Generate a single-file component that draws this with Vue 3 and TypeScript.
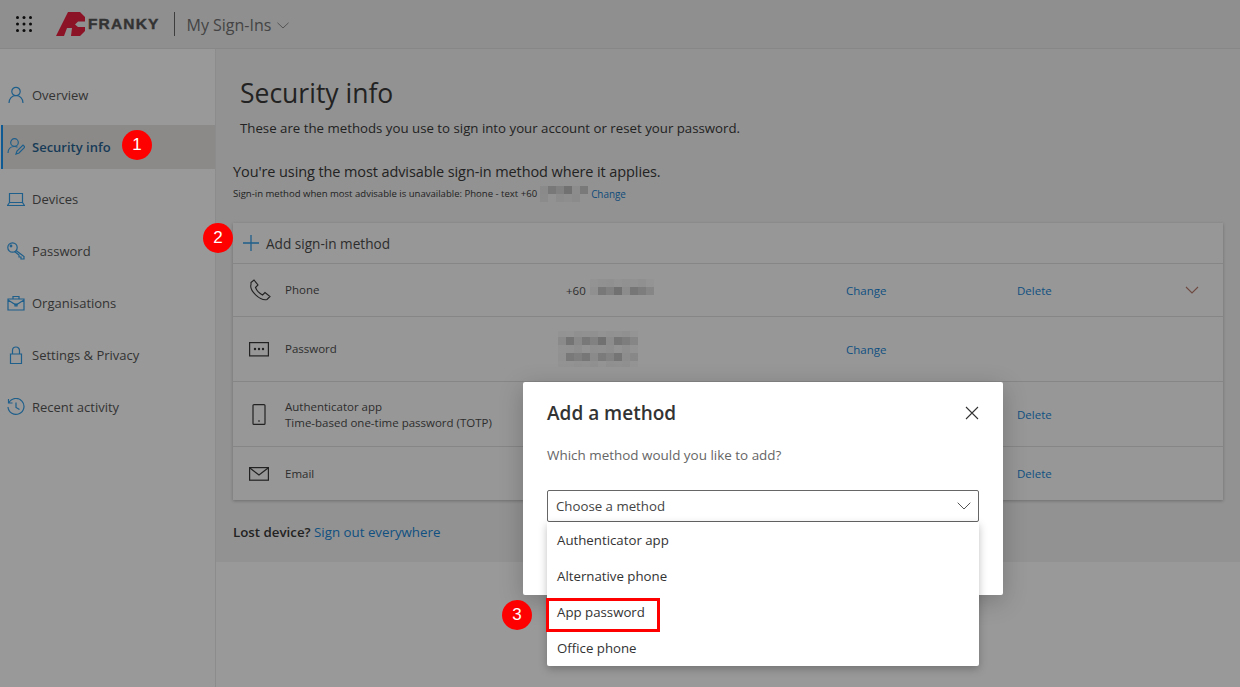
<script setup lang="ts">
const nav = [
  { label: 'Overview', icon: 'user' },
  { label: 'Security info', icon: 'sec', active: true },
  { label: 'Devices', icon: 'laptop' },
  { label: 'Password', icon: 'key' },
  { label: 'Organisations', icon: 'case' },
  { label: 'Settings & Privacy', icon: 'lock' },
  { label: 'Recent activity', icon: 'clock' },
]
const options = ['Authenticator app', 'Alternative phone', 'App password', 'Office phone']
const noise = [20, 31, 12, 36, 24, 29, 9, 33]
function blocks(cols: number, rows: number[], seed: number, edge: number) {
  const out: { x: number; y: number; f: string }[] = []
  rows.forEach((s, r) => {
    for (let c = 0; c < cols; c++) {
      const e = c === 0 || c === cols - 1 ? edge : 1
      const v = Math.round(0x95 - s * e * noise[(c * 3 + r + seed) % noise.length])
      out.push({ x: c * 8, y: r * 8, f: `rgb(${v},${v},${v})` })
    }
  })
  return out
}
const blurSmall = blocks(6, [1, 0.3], 2, 0.9)
const blurPhone = blocks(8, [0.15, 1], 1, 0.45)
const blurPass = blocks(10, [0.15, 1, 0.2, 0.9, 0.15], 3, 0.45)
</script>

<template>
  <div class="page">
    <header class="top">
      <svg class="waffle" width="16" height="16" viewBox="0 0 16 16" fill="#0c0c0c">
        <template v-for="y in [1.5, 8, 14.5]" :key="y">
          <circle v-for="x in [1.5, 8, 14.5]" :key="x" :cx="x" :cy="y" r="1.5" />
        </template>
      </svg>
      <div class="logo">
        <svg width="30" height="24" viewBox="0 0 30 24">
          <path d="M0 24 L12 0 L24 0 L29 5 L29 9.500 L22 9.500 L19 12.500 L22 15 L29 15 L29 19 L24 24 L15 24 L16 16 L11 16 L8 24 Z" fill="#8c1226" />
        </svg>
        <span class="logo-text">FRANKY</span>
      </div>
      <span class="sep"></span>
      <span class="app-name">My Sign-Ins</span>
      <svg class="app-chev" width="12" height="7" viewBox="0 0 12 7" fill="none" stroke="#555" stroke-width="1"><path d="M.5.8 6 6 11.500.8" /></svg>
    </header>
    <div class="body">
      <nav class="side">
        <div v-for="n in nav" :key="n.label" class="nav-item" :class="{ active: n.active }">
          <svg class="nav-ico" width="18" height="18" viewBox="0 0 18 18" fill="none" stroke="#1f5f8b" stroke-width="1.200">
            <template v-if="n.icon === 'user'"><circle cx="9" cy="5.500" r="4.200" /><path d="M2 17c0-4.500 3-7.500 7-7.500s7 3 7 7.500" /></template>
            <template v-else-if="n.icon === 'sec'"><circle cx="7.500" cy="4.500" r="3.800" /><path d="M1 15c0-4 2.800-6.500 6.500-6.500 1.200 0 2.200.2 3 .7" /><path d="M9 16l1-3 6-6 2 2-6 6z" /></template>
            <template v-else-if="n.icon === 'laptop'"><path d="M2.500 3.500h13v9h-13zM.5 15.500h17l-2-3h-13z" /></template>
            <template v-else-if="n.icon === 'key'"><circle cx="5.500" cy="5.500" r="4.700" /><circle cx="4" cy="4" r=".8" /><path d="M9 8.500l8 6v2.500h-3v-2h-2v-2l-4.500-3.500" /></template>
            <template v-else-if="n.icon === 'case'"><path d="M1 5h16v11H1zM6 5V2.500h6V5M1 6l8 5 8-5" /><path d="M8 10h2v2H8z" /></template>
            <template v-else-if="n.icon === 'lock'"><path d="M3.500 8h11v9.500h-11zM5.500 8V4.500a3.500 3.500 0 0 1 7 0V8" /></template>
            <template v-else><path d="M2 4.500A8 8 0 1 1 1 9M1.500 1v4h4M9 4.500V9.500l3.500 2" /></template>
          </svg>
          <span>{{ n.label }}</span>
        </div>
      </nav>
      <main class="main">
        <section class="panel">
          <h1>Security info</h1>
          <p class="lead">These are the methods you use to sign into your account or reset your password.</p>
          <p class="advice">You're using the most advisable sign-in method where it applies.</p>
          <p class="fallback">
            Sign-in method when most advisable is unavailable: Phone - text +60
            <svg class="blur" width="48" height="16"><rect v-for="(b, i) in blurSmall" :key="i" :x="b.x" :y="b.y" width="8" height="8" :fill="b.f" /></svg>
            <a>Change</a>
          </p>
          <div class="card">
            <div class="add-row">
              <svg width="16" height="16" viewBox="0 0 16 16" stroke="#1f5f8b" stroke-width="1.300"><path d="M8 0v16M0 8h16" /></svg>
              <span>Add sign-in method</span>
            </div>
            <div class="row r-phone">
              <svg class="row-ico" width="22" height="22" viewBox="0 0 22 22" fill="none" stroke="#222" stroke-width="1.100"><path d="M2 3.500 5 1l4 5-2.500 2.500c1 2.500 4 6 7 7.500l2.500-2.500 5 4-3 3c-7 1.500-18-9-16-15z" /></svg>
              <span class="name">Phone</span>
              <span class="val">+60 <svg class="blur up" width="64" height="16"><rect v-for="(b, i) in blurPhone" :key="i" :x="b.x" :y="b.y" width="8" height="8" :fill="b.f" /></svg></span>
              <a class="c1">Change</a>
              <a class="c2">Delete</a>
              <svg class="row-chev" width="14" height="8" viewBox="0 0 14 8" fill="none" stroke="#6e4a42" stroke-width="1.100"><path d="M1 1l6 6 6-6" /></svg>
            </div>
            <div class="row r-pass">
              <svg class="row-ico" width="20" height="16" viewBox="0 0 20 16" fill="none" stroke="#222" stroke-width="1.200"><rect x=".6" y="1.600" width="18.800" height="13.300" /><g fill="#222" stroke="none"><circle cx="6" cy="8" r="1.200" /><circle cx="10" cy="8" r="1.200" /><circle cx="14" cy="8" r="1.200" /></g></svg>
              <span class="name">Password</span>
              <span class="val"><svg class="blur pass" width="80" height="36"><rect v-for="(b, i) in blurPass" :key="i" :x="b.x" :y="b.y - 2" width="8" height="8" :fill="b.f" /></svg></span>
              <a class="c1">Change</a>
            </div>
            <div class="row r-auth">
              <svg class="row-ico phone-ico" width="20" height="21" viewBox="0 0 20 21" fill="none" stroke="#222" stroke-width="1.200"><rect x="4" y=".6" width="12" height="19.800" rx="1" /><path d="M9 17h2" /></svg>
              <span class="name two">Authenticator app<br />Time-based one-time password (TOTP)</span>
              <a class="c2">Delete</a>
            </div>
            <div class="row r-mail">
              <svg class="row-ico" width="20" height="14" viewBox="0 0 20 14" fill="none" stroke="#222" stroke-width="1.200"><rect x=".6" y=".6" width="18.800" height="12.600" /><path d="M.6.8 10 8l9.400-7.200" /></svg>
              <span class="name">Email</span>
              <a class="c2">Delete</a>
            </div>
          </div>
          <p class="lost"><b>Lost device?</b> <a>Sign out everywhere</a></p>
        </section>
      </main>
    </div>

    <div class="modal">
      <div class="m-head">
        <h2>Add a method</h2>
        <svg width="14" height="14" viewBox="0 0 14 14" stroke="#333" stroke-width="1.100"><path d="M1 1l12 12M13 1 1 13" /></svg>
      </div>
      <p class="m-q">Which method would you like to add?</p>
      <div class="select">
        <span>Choose a method</span>
        <svg width="14" height="8" viewBox="0 0 14 8" fill="none" stroke="#555" stroke-width="1"><path d="M.7.7 7 7 13.300.7" /></svg>
        <ul class="menu">
          <li v-for="o in options" :key="o">{{ o }}</li>
        </ul>
      </div>
    </div>

    <span class="badge b1">1</span>
    <span class="badge b2">2</span>
    <span class="badge b3">3</span>
    <span class="redbox"></span>
  </div>
</template>

<style>
html, body { margin: 0; padding: 0; background: #999; }
</style>

<style scoped>
.page { position: relative; width: 1240px; height: 687px; overflow: hidden; background: #999; color: #222; font-family: "Open Sans", "Noto Sans", sans-serif; font-size: 13px; }
.top { height: 48px; display: flex; align-items: center; background: #8f8f8f; border-bottom: 1px solid #878787; }
.waffle { margin-left: 16px; }
.logo { display: flex; align-items: center; margin-left: 24px; }
.logo-text { font-family: "Liberation Sans", sans-serif; font-weight: 700; font-size: 15.500px; letter-spacing: 1.150px; color: #333; margin-left: 2px; -webkit-text-stroke: .4px #333; }
.sep { width: 1px; height: 24px; background: #3d3d3d; margin-left: 15px; }
.app-name { font-size: 16px; line-height: 24px; padding-top: 2px; color: #444; margin-left: 11px; }
.app-chev { margin-left: 6px; margin-top: 3px; }
.body { display: flex; height: 638px; }
.side { width: 215px; padding-top: 24px; border-right: 1px solid #8c8c8c; flex: none; box-sizing: content-box; }
.nav-item { height: 44px; margin-bottom: 8px; display: flex; align-items: center; gap: 7px; padding-left: 7px; color: #333; box-sizing: border-box; }
.nav-ico { flex: none; }
.nav-item.active { background: #8b8a89; color: #173b57; font-weight: 600; border-left: 2px solid #0f5a92; margin-left: 1px; padding-left: 4px; }
.main { flex: 1; }
.panel { background: #929292; height: 513px; padding-left: 17px; padding-right: 17px; box-sizing: border-box; }
h1 { margin: 0; padding: 24px 0 0 7px; font-size: 26.500px; line-height: 40px; font-weight: 400; color: #222; }
.lead { margin: 5px 0 0 7px; font-size: 13.250px; line-height: 20px; color: #222; }
.advice { margin: 24px 0 0; font-size: 14.500px; letter-spacing: -.1px; line-height: 20px; color: #222; }
.fallback { margin: 2px 0 0; font-size: 9.550px; line-height: 20px; color: #222; height: 20px; display: flex; align-items: center; gap: 3px; }
.fallback a { color: #0f4c7a; font-size: 9.900px; }
a { color: #0f5081; }
.blur { display: inline-block; vertical-align: middle; }
.blur.up { margin-top: -7px; }
.card { margin-top: 19px; height: 277px; background: #979797; box-shadow: 0 1px 3px rgba(0,0,0,.25); }
.add-row { height: 40px; display: flex; align-items: center; gap: 7px; padding-left: 10px; border-bottom: 1px solid #868686; font-size: 13.600px; color: #2d2d2d; }
.row { position: relative; display: flex; align-items: center; border-bottom: 1px solid #868686; font-size: 11.500px; color: #2d2d2d; box-sizing: border-box; }
.r-phone { height: 53px; }
.r-pass { height: 65px; }
.r-auth { height: 65px; }
.r-mail { height: 53px; border-bottom: 0; }
.row-ico { position: absolute; left: 16px; }
.phone-ico { top: 22px; }
.name { position: absolute; left: 52px; line-height: 16px; }
.name.two { margin-top: 1px; }
.val { position: absolute; left: 333px; display: flex; align-items: center; gap: 4px; }
.blur.pass { margin-left: -8px; }
.c1 { position: absolute; left: 613px; }
.c2 { position: absolute; left: 784px; }
.row-chev { position: absolute; left: 952px; }
.lost { margin: 22px 0 0; font-size: 13.300px; line-height: 20px; color: #222; }
.lost b { font-weight: 600; }
.modal { position: absolute; left: 523px; top: 382px; width: 480px; height: 213px; background: #fff; border-radius: 2px; box-sizing: border-box; padding: 0 24px; box-shadow: 0 6px 24px rgba(0,0,0,.22); }
.m-head { display: flex; justify-content: space-between; align-items: center; height: 62px; padding-right: 0; }
h2 { margin: 0; font-size: 19px; font-weight: 600; color: #333; }
.m-q { margin: 0; font-size: 13.450px; line-height: 22px; color: #666; }
.select { position: relative; margin-top: 24px; height: 32px; border: 1px solid #666; border-radius: 2px; box-sizing: border-box; display: flex; align-items: center; justify-content: space-between; padding: 0 7px 0 8px; font-size: 13.250px; color: #444; }
.menu { position: absolute; left: -1px; right: -1px; top: 31px; margin: 0; padding: 0; list-style: none; background: #fff; box-shadow: 0 3px 8px rgba(0,0,0,.25); border-radius: 0 0 2px 2px; }
.menu li { height: 36px; line-height: 36px; padding-left: 10px; font-size: 13.250px; color: #333; }
.badge { position: absolute; width: 30px; height: 30px; border-radius: 50%; background: #f00; color: #fff; font-family: "Liberation Sans", sans-serif; font-size: 17px; line-height: 30px; text-align: center; }
.b1 { left: 122px; top: 130px; }
.b2 { left: 203px; top: 223px; }
.b3 { left: 502px; top: 600px; }
.redbox { position: absolute; left: 546px; top: 598px; width: 114px; height: 34px; box-sizing: border-box; border: 3px solid #f00; }
</style>
